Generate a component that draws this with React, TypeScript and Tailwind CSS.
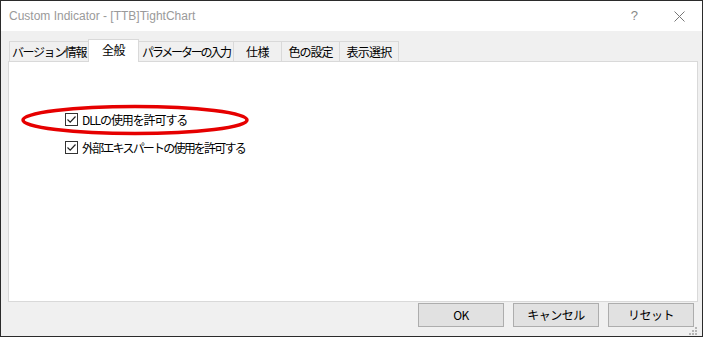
import React from "react";

const tabs = [
  { label: "バージョン情報", w: "w-[80px]", tr: "tracking-[-1.4px]" },
  { label: "全般", w: "w-[51px]", tr: "tracking-[-0.5px]", active: true },
  { label: "パラメーターの入力", w: "w-[96px]", tr: "tracking-[-2.2px]" },
  { label: "仕様", w: "w-[49px]", tr: "tracking-[-0.5px]" },
  { label: "色の設定", w: "w-[59px]", tr: "tracking-[-1px]" },
  { label: "表示選択", w: "w-[60px]", tr: "tracking-[-0.8px]" },
];

const options = [
  { label: "DLLの使用を許可する", tr: "tracking-[-1.1px]" },
  { label: "外部エキスパートの使用を許可する", tr: "tracking-[-1.8px]" },
];

const buttons = ["OK", "キャンセル", "リセット"];

const CheckBox = () => (
  <span className="flex h-[13px] w-[13px] shrink-0 items-center justify-center border border-[#333] bg-white">
    <svg width="11" height="11" viewBox="0 0 11 11" fill="none">
      <path d="M1.5 5.5 L4.2 8.2 L9.5 2.5" stroke="#222" strokeWidth="1.2" />
    </svg>
  </span>
);

export default function App() {
  return (
    <div className="flex h-[337px] w-[703px] flex-col border border-[#2b2b2b] bg-[#f0f0f0] font-['Noto_Sans_CJK_JP','Noto_Sans',sans-serif] text-[12px] text-black">
      <div className="flex h-[30px] items-center bg-white pl-[8px] pr-[17px]">
        <span className="font-['Liberation_Sans','Noto_Sans',sans-serif] text-[12px] text-[#9a9a9a]">
          Custom Indicator - [TTB]TightChart
        </span>
        <span className="ml-auto mr-[36px] font-['Liberation_Sans',sans-serif] text-[13px] text-[#888]">?</span>
        <svg width="11" height="11" viewBox="0 0 11 11">
          <path d="M0.5 0.5 L10.5 10.5 M10.5 0.5 L0.5 10.5" stroke="#777" strokeWidth="1" />
        </svg>
      </div>

      <div className="flex flex-1 flex-col pl-[7px] pr-[4px] pt-[8px]">
        <div className="flex h-[22px] items-end pl-[1px]">
          {tabs.map((t, i) =>
            t.active ? (
              <div
                key={t.label}
                className={`relative z-10 -mb-px -ml-px flex h-[23px] shrink-0 items-center justify-center whitespace-nowrap border border-b-0 border-[#d9d9d9] bg-white pb-[2px] ${t.tr} ${t.w}`}
              >
                {t.label}
              </div>
            ) : (
              <div
                key={t.label}
                className={`flex h-[20px] shrink-0 items-center justify-center whitespace-nowrap border border-b-0 border-[#d9d9d9] bg-[#f0f0f0] pt-[1px] ${t.tr} ${i > 0 ? "-ml-px" : ""} ${t.w}`}
              >
                {t.label}
              </div>
            )
          )}
        </div>

        <div className="relative flex h-[241px] flex-col gap-[15px] border border-[#d9d9d9] bg-white pl-[56px] pt-[51px]">
          {options.map((o) => (
            <label key={o.label} className="flex h-[13px] items-center gap-[4px]">
              <CheckBox />
              <span className={`whitespace-nowrap leading-none ${o.tr}`}>{o.label}</span>
            </label>
          ))}
          <svg className="absolute left-[11px] top-[42px]" width="232" height="33" viewBox="0 0 232 33">
            <ellipse cx="115" cy="16" rx="112" ry="13.5" fill="none" stroke="#e60000" strokeWidth="3.5" />
          </svg>
        </div>

        <div className="relative mt-[1px] flex justify-end gap-[9px] pr-[4px]">
          {buttons.map((b) => (
            <div
              key={b}
              className="flex h-[24px] w-[86px] items-center justify-center border border-[#adadad] bg-[#e1e1e1] text-[12px] tracking-[-0.5px]"
            >
              {b}
            </div>
          ))}
          <svg className="absolute right-[1px] top-[24px]" width="8" height="8" viewBox="0 0 8 8" fill="#b5b5b5">
            <rect x="6" y="0" width="2" height="2" />
            <rect x="3" y="3" width="2" height="2" />
            <rect x="6" y="3" width="2" height="2" />
            <rect x="0" y="6" width="2" height="2" />
            <rect x="3" y="6" width="2" height="2" />
            <rect x="6" y="6" width="2" height="2" />
          </svg>
        </div>
      </div>
    </div>
  );
}
